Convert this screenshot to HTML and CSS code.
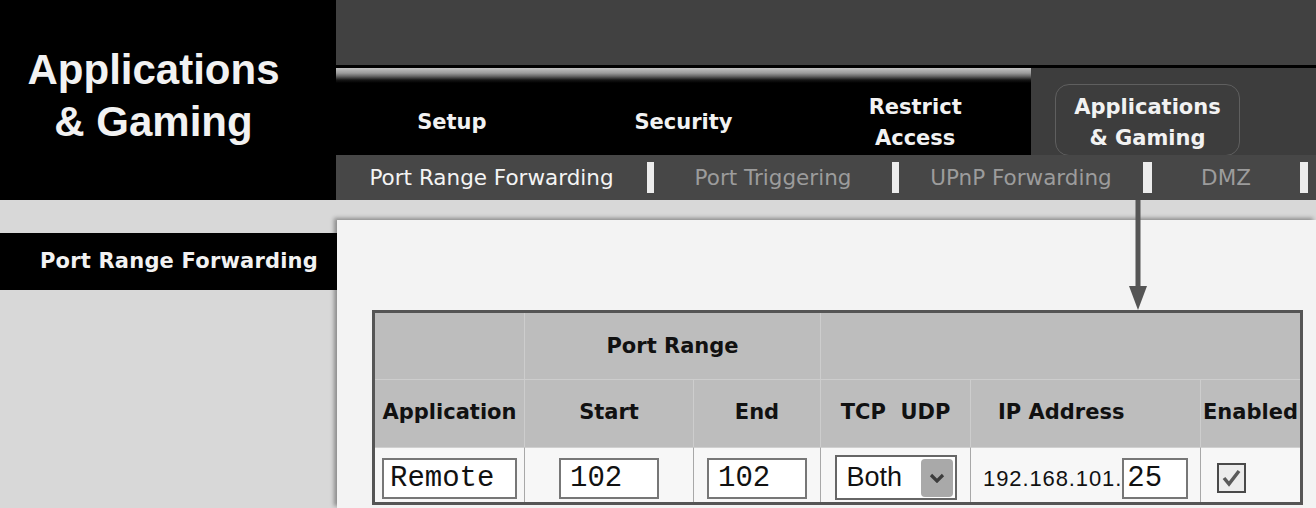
FILE: index.html
```html
<!doctype html>
<html lang="en">
<head>
    <meta charset="UTF-8" />
    <title>Applications &amp; Gaming - Port Range Forwarding</title>
    <link rel="stylesheet" href="styles.css">
</head>
<body>
    <header class="masthead">
        <div class="brand">
            <h1>Applications<br>&amp; Gaming</h1>
        </div>

        <div class="nav">
            <div class="nav-top"></div>

            <div class="tabs">
                <div class="tabs-main">
                    <a href="#" class="tab">Setup</a>
                    <a href="#" class="tab">Security</a>
                    <a href="#" class="tab">Restrict<br>Access</a>
                </div>
                <div class="tabs-rest">
                    <a href="#" class="tab tab-active">Applications<br>&amp; Gaming</a>
                </div>
            </div>

            <nav class="subnav">
                <a href="#" class="current">Port Range Forwarding</a>
                <span class="sep"></span>
                <a href="#">Port Triggering</a>
                <span class="sep"></span>
                <a href="#">UPnP Forwarding</a>
                <span class="sep"></span>
                <a href="#">DMZ</a>
                <span class="sep"></span>
            </nav>
        </div>
    </header>

    <main class="main">
        <aside class="sidebar">
            <div class="side-title">Port Range Forwarding</div>
        </aside>

        <section class="content">
            <table class="forward-table">
                <colgroup>
                    <col class="col-app">
                    <col class="col-start">
                    <col class="col-end">
                    <col class="col-proto">
                    <col class="col-ip">
                    <col class="col-enabled">
                </colgroup>
                <tr class="head-top">
                    <th></th>
                    <th colspan="2">Port Range</th>
                    <th colspan="3"></th>
                </tr>
                <tr class="head-cols">
                    <th>Application</th>
                    <th>Start</th>
                    <th>End</th>
                    <th>TCP&nbsp; UDP</th>
                    <th class="th-ip">IP Address</th>
                    <th>Enabled</th>
                </tr>
                <tr class="entry">
                    <td class="cell-app"><input class="field field-name" type="text" value="Remote"></td>
                    <td><input class="field field-port" type="text" value="102"></td>
                    <td><input class="field field-port" type="text" value="102"></td>
                    <td class="cell-proto">
                        <div class="select">
                            <span class="select-value">Both</span>
                            <span class="select-btn">
                                <svg width="16" height="10" viewBox="0 0 16 10">
                                    <path d="M2 2 L8 8 L14 2" fill="none" stroke="#3c3c3c" stroke-width="3.2"/>
                                </svg>
                            </span>
                        </div>
                    </td>
                    <td class="cell-ip">
                        <div class="ip">
                            <span class="ip-prefix">192.168.101.</span>
                            <input class="field field-host" type="text" value="25">
                        </div>
                    </td>
                    <td class="cell-check">
                        <span class="check">
                            <svg width="25" height="26" viewBox="0 0 25 26">
                                <path d="M5 13 L10 19 L20 6" fill="none" stroke="#5a5a5a" stroke-width="3.5"/>
                            </svg>
                        </span>
                    </td>
                </tr>
            </table>
        </section>
    </main>

    <!-- callout arrow from the active tab down to the table -->
    <svg class="pointer" width="20" height="110" viewBox="0 0 20 110">
        <rect x="7.5" y="0" width="5" height="92" fill="#555"/>
        <polygon points="1,86 19,86 10,110" fill="#555"/>
    </svg>
</body>
</html>
```

FILE: styles.css
```css
* {
    margin: 0;
    padding: 0;
    box-sizing: border-box;
}

body {
    font-family: "DejaVu Sans", Verdana, sans-serif;
    background: #d8d8d8;
    width: 1316px;
    height: 508px;
    overflow: hidden;
    position: relative;
}

a {
    text-decoration: none;
}

/* header */

.masthead {
    display: flex;
    height: 200px;
}

.brand {
    width: 336px;
    background: #000;
    padding-top: 44px;
}

.brand h1 {
    width: 307px;
    text-align: center;
    font-family: "Liberation Sans", Arial, sans-serif;
    font-size: 42px;
    line-height: 52px;
    font-weight: 700;
    color: #f2f2f2;
}

.nav {
    flex: 1;
    display: flex;
    flex-direction: column;
}

.nav-top {
    height: 68px;
    background: #414141;
    border-bottom: 3px solid #000;
}

.tabs {
    height: 87px;
    display: flex;
}

.tabs-main {
    width: 695px;
    display: flex;
    background: linear-gradient(#c2c2c2 0, #9c9c9c 5px, #6a6a6a 8px, #161616 12px, #000 15px);
}

.tab {
    flex: 1;
    display: flex;
    align-items: center;
    justify-content: center;
    text-align: center;
    padding-top: 22px;
    color: #f2f2f2;
    font-size: 21px;
    font-weight: 700;
    line-height: 31px;
}

.tabs-rest {
    flex: 1;
    background: #3d3d3d;
    padding: 16px 0 0 24px;
}

.tab-active {
    flex: none;
    width: 185px;
    height: 72px;
    padding-top: 5px;
    border: 1px solid #5f5f5f;
    border-radius: 14px;
}

.subnav {
    height: 45px;
    background: #474747;
    display: grid;
    grid-template-columns: 311px 7px 238px 7px 244px 9px 148px 8px;
    align-items: center;
}

.subnav a {
    text-align: center;
    color: #9c9c9c;
    font-size: 21.5px;
}

.subnav a.current {
    color: #f4f4f4;
}

.subnav .sep {
    height: 31px;
    background: #ececec;
}

/* body */

.main {
    display: flex;
    height: 308px;
    padding-top: 20px;
}

.sidebar {
    width: 337px;
    padding-top: 13px;
}

.side-title {
    height: 57px;
    line-height: 57px;
    background: #000;
    color: #f2f2f2;
    font-size: 21px;
    font-weight: 700;
    text-align: right;
    padding-right: 19px;
    letter-spacing: 0.2px;
}

.content {
    flex: 1;
    background: #f3f3f3;
    box-shadow: -3px -2px 4px rgba(0, 0, 0, 0.35);
    padding: 90px 0 0 35px;
}

/* table */

.forward-table {
    width: 931px;
    table-layout: fixed;
    border-collapse: separate;
    border-spacing: 0;
    border: 3px solid #555;
}

.col-app { width: 149px; }
.col-start { width: 169px; }
.col-end { width: 127px; }
.col-proto { width: 150px; }
.col-ip { width: 230px; }
.col-enabled { width: 100px; }

.head-top { height: 66px; }
.head-cols { height: 68px; }
.entry { height: 55px; }

.forward-table th {
    background: #bdbdbd;
    color: #111;
    font-size: 21px;
    font-weight: 700;
    border-left: 1px solid #cdcdcd;
}

.head-cols th {
    border-top: 1px solid #cdcdcd;
    padding-bottom: 4px;
}

.forward-table th:first-child,
.forward-table td:first-child {
    border-left: none;
}

.forward-table .th-ip {
    text-align: left;
    padding-left: 27px;
}

.forward-table td {
    background: #f7f7f7;
    border-left: 1px solid #a8a8a8;
    border-top: 1px solid #d0d0d0;
    vertical-align: top;
    text-align: center;
    padding-top: 10px;
}

.forward-table td.cell-app {
    text-align: left;
    padding-left: 7px;
}

.forward-table td.cell-proto {
    padding-top: 7px;
}

.forward-table td.cell-ip {
    text-align: left;
    padding-left: 12px;
}

.forward-table td.cell-check {
    text-align: left;
    padding: 15px 0 0 16px;
}

.field {
    height: 41px;
    border: 2px solid #777;
    background: #fff;
    font-family: "Liberation Mono", monospace;
    font-size: 29px;
    color: #111;
    padding: 0 6px;
    outline: none;
}

.field-name {
    width: 135px;
}

.field-port {
    width: 100px;
    padding-left: 9px;
}

.field-host {
    width: 66px;
    padding-left: 3px;
}

.select {
    display: inline-flex;
    align-items: center;
    justify-content: space-between;
    width: 122px;
    height: 45px;
    border: 2px solid #666;
    background: #fff;
    padding: 0 2px 0 10px;
    vertical-align: top;
}

.select-value {
    font-family: "Liberation Sans", Arial, sans-serif;
    font-size: 27px;
    color: #111;
}

.select-btn {
    display: flex;
    align-items: center;
    justify-content: center;
    width: 32px;
    height: 38px;
    background: #a9a9a9;
    border-radius: 4px;
}

.ip {
    display: flex;
    align-items: baseline;
    font-family: "Liberation Sans", Arial, sans-serif;
    font-size: 22px;
    color: #111;
}

.ip-prefix {
    letter-spacing: 0.9px;
}

.check {
    display: inline-flex;
    width: 29px;
    height: 30px;
    border: 2px solid #4a4a4a;
    background: #ececec;
}

.pointer {
    position: absolute;
    left: 1128px;
    top: 200px;
}
```
